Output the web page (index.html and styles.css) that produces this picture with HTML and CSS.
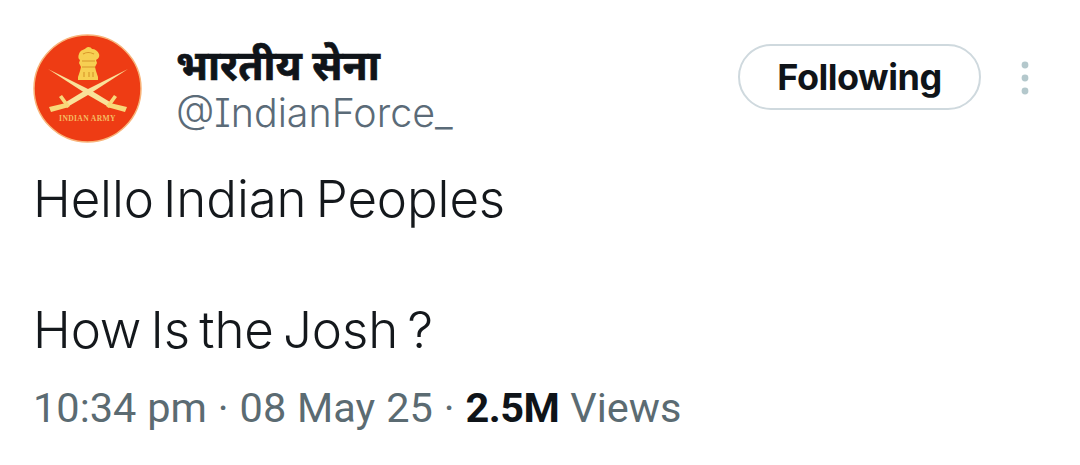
FILE: index.html
```html
<!DOCTYPE html>
<html lang="en">
<head>
<meta charset="utf-8">
<title>Tweet</title>
<link rel="stylesheet" href="styles.css">
</head>
<body>
<main class="tweet">
  <header class="head">
    <svg class="avatar" viewBox="0 0 110 110" aria-hidden="true">
      <circle cx="55.5" cy="55.5" r="53.5" fill="#ee3c14" stroke="#f8b47a" stroke-width="1.5"/>
      <path d="M47 21c1-4 5-4 7-6 2-2 5-1 6 1 3 0 6 2 7 5 1 3-1 5-3 6l1 3-2 4 1 4 2 6v3H46v-3l2-6 1-4-2-4 1-3c-2-1-2-4-1-6z" fill="#f7cf52"/>
      <path d="M51 21q5-3 11 0M50 28h13M50 34h13M52 39v5M57 39v5M61 39v5" stroke="#d8962a" stroke-width="1.1" fill="none"/>
      <path d="M16 36 L60 58 L78 69 L75 73 L56 62 Z" fill="#f9e29a"/>
      <path d="M96 36 L52 58 L34 69 L37 73 L56 62 Z" fill="#f9e29a"/>
      <path d="M30 62l8 11-3 2-8-11zM82 62l-8 11 3 2 8-11z" fill="#f8d879"/>
      <path d="M34 70L17 74l2 5 18-5zM78 70l17 4-2 5-18-5z" fill="#f8d879"/>
      <text class="avatar-label" x="55.5" y="88" text-anchor="middle">INDIAN ARMY</text>
    </svg>
    <div class="names">
      <div class="name">भारतीय सेना</div>
      <div class="handle">@IndianForce_</div>
    </div>
    <button class="follow" type="button">Following</button>
    <svg class="more" viewBox="0 0 10 36" aria-hidden="true">
      <circle cx="5" cy="5" r="3.4"/>
      <circle cx="5" cy="18" r="3.4"/>
      <circle cx="5" cy="31" r="3.4"/>
    </svg>
  </header>
  <p class="text">Hello Indian Peoples</p>
  <p class="text second">How Is the Josh ?</p>
  <p class="meta">10:34 pm · 08 May 25 · <b class="count">2.5M</b> Views</p>
</main>
</body>
</html>
```
FILE: styles.css
```css
* { box-sizing: border-box; }
html, body { margin: 0; background: #fff; }
body { font-family: Inter, Roboto, sans-serif; color: #14181c; width: 1080px; height: 465px; overflow: hidden; }
.tweet { padding: 33px 50px 0 32px; }
.head { display: flex; align-items: flex-start; }
.avatar { width: 110px; height: 110px; flex: none; }
.avatar-label { font: 700 7.6px "Liberation Serif", serif; fill: #f5bb62; letter-spacing: .35px; }
.names { flex: 1; margin-left: 34px; padding-top: 8px; }
.name { font: 700 41px/46px "Noto Sans", "DejaVu Sans", sans-serif; color: #0f1419; -webkit-text-stroke: .7px #0f1419; }
.handle { font-size: 39.4px; line-height: 44px; color: #5b6b78; margin-top: 4px; font-weight: 300; font-feature-settings: "cv08" 1; }
.follow { width: 243px; height: 66px; margin-top: 11px; border: 2.5px solid #cfd9de; border-radius: 33px; background: #fff; font: 700 36px Inter, sans-serif; letter-spacing: -0.5px; color: #0f1419; padding: 0; }
.more { width: 10px; height: 36px; margin: 27px 0 0 39px; fill: #b4c8cc; flex: none; }
.text { margin: 0 0 0 1px; font-size: 51px; font-weight: 340; word-spacing: -5px; letter-spacing: -.1px; line-height: 54px; color: #14181c; }
.head + .text { margin-top: 29px; }
.second { margin-top: 77px; }
.meta { margin: 28px 0 0 1px; font: 400 41.5px/46px Roboto, sans-serif; word-spacing: .6px; color: #5b6b72; }
.count { color: #0f1419; font-weight: 700; letter-spacing: -.5px; }
```
